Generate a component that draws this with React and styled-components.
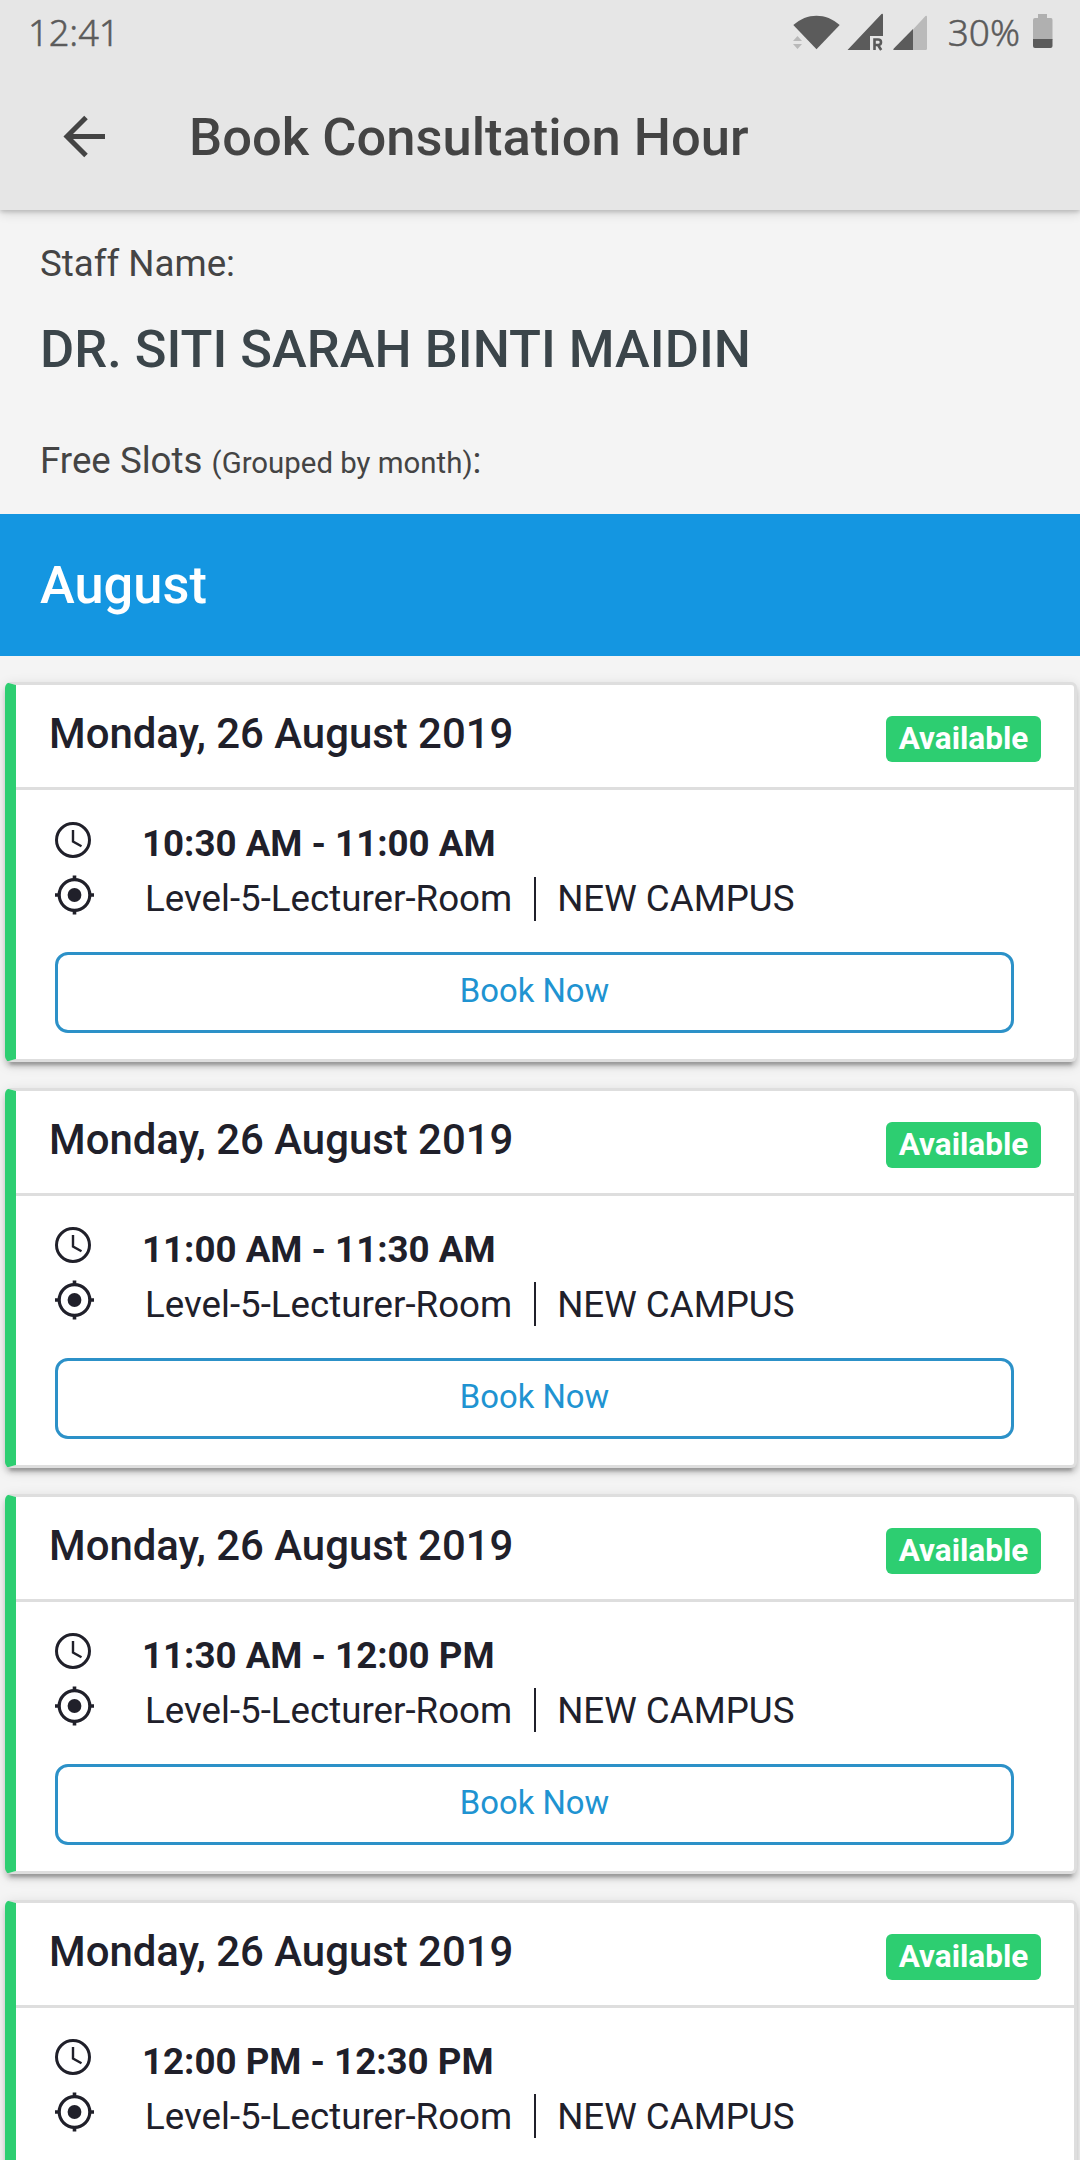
import React from 'react';
import styled, { createGlobalStyle } from 'styled-components';

const GlobalStyle = createGlobalStyle`
   * {
      box-sizing: border-box;
   }

   body {
      margin: 0;
      background: #f4f4f4;
      font-family: Roboto, sans-serif;
   }
`;

const Page = styled.div`
   width: 1080px;
   height: 2160px;
   overflow: hidden;
   background: #f4f4f4;
   color: #444;
`;

const Top = styled.header`
   position: relative;
   height: 210px;
   background: #e6e6e6;
   box-shadow: 0 2px 4px rgba(0, 0, 0, 0.16), 0 4px 10px rgba(0, 0, 0, 0.12);
`;

const StatusBar = styled.div`
   display: flex;
   align-items: center;
   justify-content: space-between;
   height: 64px;
   padding: 0 27px 0 28px;
   color: #5b5b5b;
   font-family: 'Noto Sans', sans-serif;
   font-size: 37px;
   font-weight: 300;
   line-height: 64px;
   -webkit-text-stroke: 0.5px #5b5b5b;
`;

const Clock = styled.span`
   font-size: 36.2px;
`;

const StatusIcons = styled.div`
   display: flex;
   align-items: center;
`;

const Percent = styled.span`
   margin: 0 13px 0 20px;
`;

const Toolbar = styled.div`
   display: flex;
   align-items: center;
   height: 146px;
   padding-left: 62px;
`;

const Title = styled.h1`
   margin: 0 0 0 83px;
   font-size: 52.5px;
   font-weight: 500;
   line-height: 62px;
`;

const Info = styled.section`
   height: 304px;
   padding: 32px 40px 0;
`;

const Label = styled.div`
   font-size: 36.7px;
   line-height: 44px;

   small {
      font-size: 29.4px;
   }
`;

const StaffName = styled.h2`
   margin: 32px 0 59px;
   color: #3b454a;
   font-size: 52.4px;
   font-weight: 500;
   line-height: 62px;
`;

const Month = styled.div`
   height: 142px;
   padding-left: 40px;
   background: #1496e1;
   color: #fff;
   font-size: 52.4px;
   font-weight: 500;
   line-height: 143px;
`;

const Slots = styled.div`
   display: flex;
   flex-direction: column;
   gap: 25.8px;
   padding: 26.2px 3px 0 5px;
`;

const Card = styled.article`
   flex: none;
   height: 380px;
   border: 3px solid #dedede;
   border-left: 11px solid #2dce71;
   border-radius: 6px;
   background: #fff;
   color: #20202a;
   box-shadow: 0 8px 3px -5px rgba(0, 0, 0, 0.2),
      0 5px 5px 0 rgba(0, 0, 0, 0.14), 0 3px 13px 0 rgba(0, 0, 0, 0.12);
`;

const CardHeader = styled.div`
   display: flex;
   align-items: flex-start;
   justify-content: space-between;
   height: 105px;
   padding: 24px 33px 0;
   border-bottom: 3px solid #dedede;
`;

const SlotDate = styled.div`
   font-size: 41.9px;
   font-weight: 500;
   line-height: 50px;
`;

const Badge = styled.span`
   width: 155px;
   height: 46px;
   margin-top: 7px;
   border-radius: 6px;
   background: #2dce71;
   color: #fff;
   font-size: 31.5px;
   font-weight: 700;
   line-height: 46.5px;
   text-align: center;
`;

const CardBody = styled.div`
   padding: 26px 60px 0 39px;
`;

const Row = styled.div`
   display: flex;
   align-items: center;
   height: 55px;
   font-size: 36.7px;
   font-weight: ${({ $bold }) => ($bold ? 700 : 400)};

   svg {
      flex: none;
      margin: 0 ${({ $bold }) => ($bold ? 48 : 51)}px 8px 0;
   }
`;

const Separator = styled.span`
   width: 2px;
   height: 44px;
   margin: 0 21px 0 22px;
   background: #20202a;
`;

const BookButton = styled.button`
   display: block;
   width: 100%;
   height: 81px;
   margin-top: 26px;
   padding: 0 0 3px;
   border: 3px solid #2c91c8;
   border-radius: 13px;
   background: #fff;
   color: #2093d1;
   font-family: inherit;
   font-size: 32.8px;
`;

const slots = [
   { time: '10:30 AM - 11:00 AM', bookable: true },
   { time: '11:00 AM - 11:30 AM', bookable: true },
   { time: '11:30 AM - 12:00 PM', bookable: true },
   { time: '12:00 PM - 12:30 PM', bookable: false },
];

const SignalIcons = () => (
   <svg width='136' height='40' viewBox='792 11 136 40' fill='#5b5b5b'>
      <path d='M793.3 24C807 11.500 826 11.500 839.700 24L816.500 48.300Z' />
      <path d='M793 40l4.500-5 4.500 5zM793 43h9l-4.500 5z' fill='#b9b9b9' />
      <path d='M847.500 49L881.500 13Q883 12 883 14V35H870V49Z' />
      <path
         d='M874.500 49V38.500H878Q881 38.500 881 41.200 881 44 878 44H874.500M878 44L881.200 49'
         fill='none'
         stroke='#5b5b5b'
         strokeWidth='2.600'
      />
      <path d='M894 49L925.500 15Q927 14 927 16V47.500Q927 49 925.500 49Z' fill='#bababa' />
      <path d='M913 28V49H894.500Q892.500 49 893.800 47.500Z' />
   </svg>
);

const BatteryIcon = () => (
   <svg width='20' height='36' viewBox='0 0 20 36'>
      <path d='M5 0H14V4H18Q19.500 4 19.500 6V26H0V6Q0 4 2 4H5Z' fill='#b0b0b0' />
      <path d='M0 25H19.500V32Q19.500 34 17.500 34H2Q0 34 0 32Z' fill='#5b5b5b' />
   </svg>
);

const BackIcon = () => (
   <svg width='44' height='44' viewBox='0 0 44 44' fill='none' stroke='#444' strokeWidth='5'>
      <path d='M43 21.500H5M24 2.500L5 21.500 24 40.500' />
   </svg>
);

const ClockIcon = () => (
   <svg width='39' height='40' viewBox='0 0 39 40' fill='none' stroke='#20202a'>
      <circle cx='18' cy='20' r='16.500' strokeWidth='3' />
      <path d='M18 10V21.500L26.500 26.300' strokeWidth='2.400' />
   </svg>
);

const LocateIcon = () => (
   <svg width='39' height='40' viewBox='0 0 39 40' fill='none' stroke='#20202a'>
      <circle cx='19.500' cy='20' r='15.300' strokeWidth='3.200' />
      <circle cx='19.500' cy='20' r='6.900' fill='#20202a' stroke='none' />
      <path d='M19.500 .5V5M19.500 35V39.500M0 20H4.500M34.500 20H39' strokeWidth='3.600' />
   </svg>
);

const SlotCard = ({ time, bookable }) => (
   <Card>
      <CardHeader>
         <SlotDate>Monday, 26 August 2019</SlotDate>
         <Badge>Available</Badge>
      </CardHeader>
      <CardBody>
         <Row $bold>
            <ClockIcon />
            <span>{time}</span>
         </Row>
         <Row>
            <LocateIcon />
            <span>Level-5-Lecturer-Room</span>
            <Separator />
            <span>NEW CAMPUS</span>
         </Row>
         {bookable && <BookButton>Book Now</BookButton>}
      </CardBody>
   </Card>
);

const App = () => (
   <Page>
      <GlobalStyle />
      <Top>
         <StatusBar>
            <Clock>12:41</Clock>
            <StatusIcons>
               <SignalIcons />
               <Percent>30%</Percent>
               <BatteryIcon />
            </StatusIcons>
         </StatusBar>
         <Toolbar>
            <BackIcon />
            <Title>Book Consultation Hour</Title>
         </Toolbar>
      </Top>
      <Info>
         <Label>Staff Name:</Label>
         <StaffName>DR. SITI SARAH BINTI MAIDIN</StaffName>
         <Label>
            Free Slots <small>(Grouped by month)</small>:
         </Label>
      </Info>
      <Month>August</Month>
      <Slots>
         {slots.map((slot) => (
            <SlotCard key={slot.time} {...slot} />
         ))}
      </Slots>
   </Page>
);

export default App;
